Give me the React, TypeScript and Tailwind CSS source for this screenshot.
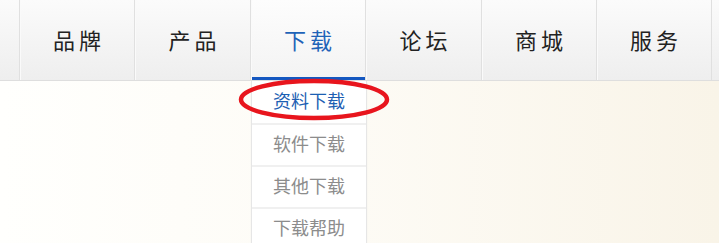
const navItems = [
  { name: "品牌", w: "w-[115px]" },
  { name: "产品", w: "w-[116px]" },
  { name: "下载", w: "w-[115px]" },
  { name: "论坛", w: "w-[116px]" },
  { name: "商城", w: "w-[115px]" },
  { name: "服务", w: "w-[115px]" },
];
const subItems = ["资料下载", "软件下载", "其他下载", "下载帮助"];

export default function App() {
  return (
    <div
      className="relative w-[719px] h-[243px] overflow-hidden bg-gradient-to-r from-[#fffffd] via-[#fdfbf5] to-[#f9f4e8]"
      style={{ fontFamily: '"Noto Sans CJK SC", "Noto Sans", sans-serif' }}
    >
      {/* 导航条 */}
      <div className="flex h-[81px] pl-[19px] bg-gradient-to-b from-[#fbfbfb] to-[#eeeeee] border-b border-[#dedede]">
        {navItems.map((it, i) => (
          <div
            key={it.name}
            className={
              "relative shrink-0 flex items-center justify-center text-[22px] tracking-[4px] border-l border-[#e0e0e0] shadow-[inset_1px_0_0_#fafafa] " +
              it.w +
              (i === 2 ? " text-[#1f63b8] bg-gradient-to-b from-[#fdfdfd] to-[#f3f3f3]" : " text-[#222]")
            }
          >
            <span className="-mt-[2px] pl-[4px]">{it.name}</span>
            {i === 2 && <div className="absolute left-[1px] right-0 bottom-0 h-[3px] bg-[#1457c0]" />}
          </div>
        ))}
        <div className="w-[8px] border-l border-[#e0e0e0]" />
      </div>

      {/* 下拉菜单 */}
      <div className="absolute left-[251px] top-[81px] w-[116px] bg-white border-x border-b border-[#e6e6e6] rounded-b-[6px] shadow-[0_1px_2px_rgba(0,0,0,0.05)]">
        {subItems.map((s, i) => (
          <div
            key={s}
            className={
              "h-[42px] flex items-center justify-center text-[18px] " +
              (i === 0 ? "text-[#1d5fb3]" : "text-[#8c8c8c] border-t-2 border-[#f0f0f0]")
            }
          >
            <span className="-mt-[3px]">{s}</span>
          </div>
        ))}
      </div>

      {/* 红圈标注 */}
      <svg className="absolute left-[236px] top-[78px]" width="156" height="44" viewBox="0 0 156 44">
        <ellipse cx="78" cy="21.5" rx="73" ry="18.5" fill="none" stroke="#e8151d" strokeWidth="4.5" />
      </svg>
    </div>
  );
}
